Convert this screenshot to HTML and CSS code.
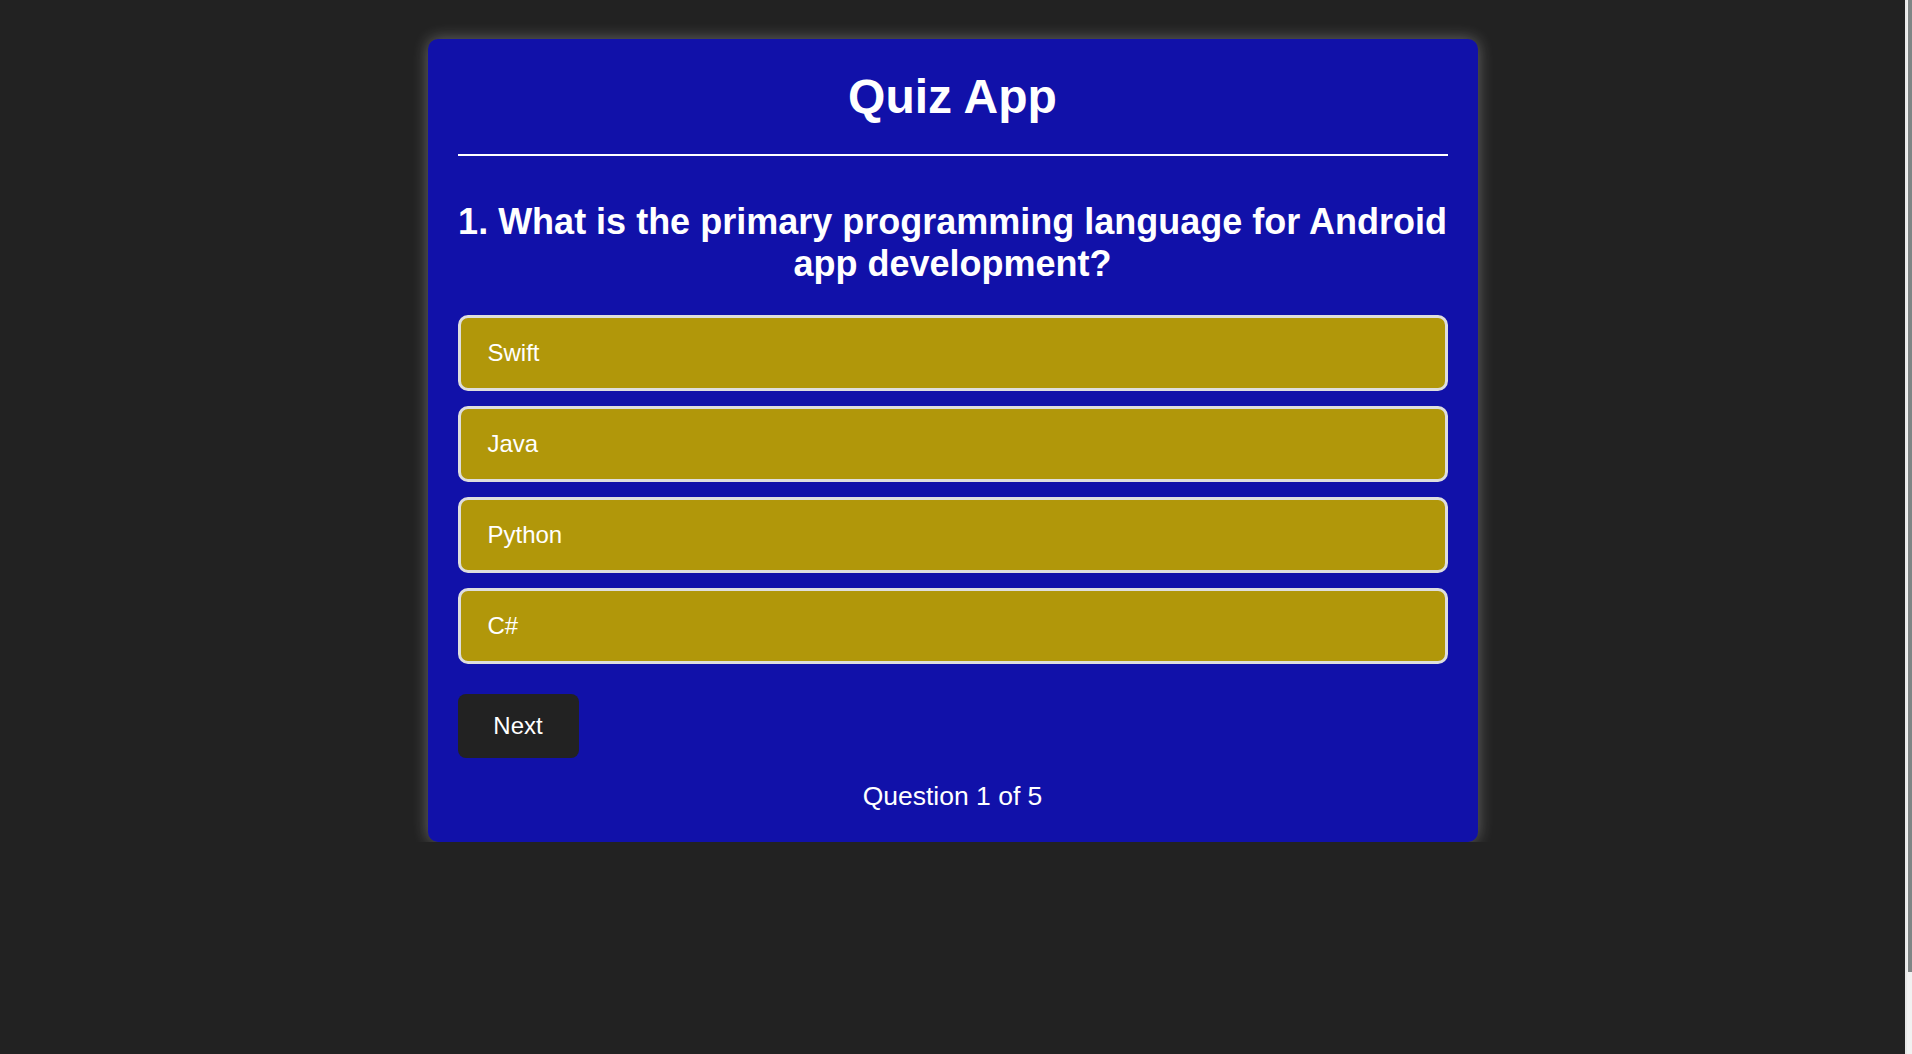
FILE: index.html
```html
<!DOCTYPE html>
<html lang="en">
<head>
<meta charset="utf-8">
<title>Quiz App</title>
<link rel="stylesheet" href="styles.css">
</head>
<body>
<div class="page">
  <main class="card">
    <h1 class="title">Quiz App</h1>
    <hr class="rule">
    <h2 class="question">1. What is the primary programming language for Android app development?</h2>
    <div class="options">
      <button class="option">Swift</button>
      <button class="option">Java</button>
      <button class="option">Python</button>
      <button class="option">C#</button>
    </div>
    <button class="next">Next</button>
    <p class="progress">Question 1 of 5</p>
  </main>
</div>
<div class="scrollbar"><div class="thumb"></div></div>
</body>
</html>
```

FILE: styles.css
```css
html, body {
  margin: 0;
  padding: 0;
  background: #222222;
  font-family: "Liberation Sans", Arial, sans-serif;
  color: #ffffff;
}

.page {
  width: 1905px;
  padding-top: 39px;
  box-sizing: border-box;
}

.card {
  width: 1050px;
  box-sizing: border-box;
  margin: 0 auto;
  padding: 30px;
  background: #1111a9;
  border-radius: 10px;
  box-shadow: 0 0 16px rgba(255, 255, 255, 0.32);
  display: flex;
  flex-direction: column;
}

.title {
  margin: 0;
  font-size: 48px;
  font-weight: bold;
  text-align: center;
  line-height: normal;
}

.rule {
  margin: 30px 0 0;
  border: none;
  height: 2px;
  background: #ffffff;
}

.question {
  margin: 45px 0 0;
  font-size: 36px;
  font-weight: bold;
  text-align: center;
  line-height: normal;
}

.options {
  margin-top: 30px;
  display: flex;
  flex-direction: column;
  gap: 15px;
}

.option {
  height: 76px;
  box-sizing: border-box;
  display: flex;
  align-items: center;
  padding: 0 27px;
  background: #b1970a;
  border: 3px solid #dedede;
  border-radius: 10px;
  color: #ffffff;
  font-family: "Liberation Sans", Arial, sans-serif;
  font-size: 24px;
  text-align: left;
}

.next {
  margin-top: 30px;
  align-self: flex-start;
  width: 121px;
  height: 64px;
  background: #222222;
  border: none;
  border-radius: 8px;
  color: #ffffff;
  font-family: "Liberation Sans", Arial, sans-serif;
  font-size: 24px;
}

.progress {
  margin: 23px 0 0;
  font-size: 26.5px;
  text-align: center;
  line-height: normal;
}

.scrollbar {
  position: fixed;
  top: 0;
  right: 0;
  width: 7px;
  height: 100%;
  background: #f1f1f1;
  border-left: 2px solid #e8e8e8;
  box-sizing: border-box;
}

.thumb {
  margin-left: 1px;
  height: 972px;
  background: #7f8585;
}
```
